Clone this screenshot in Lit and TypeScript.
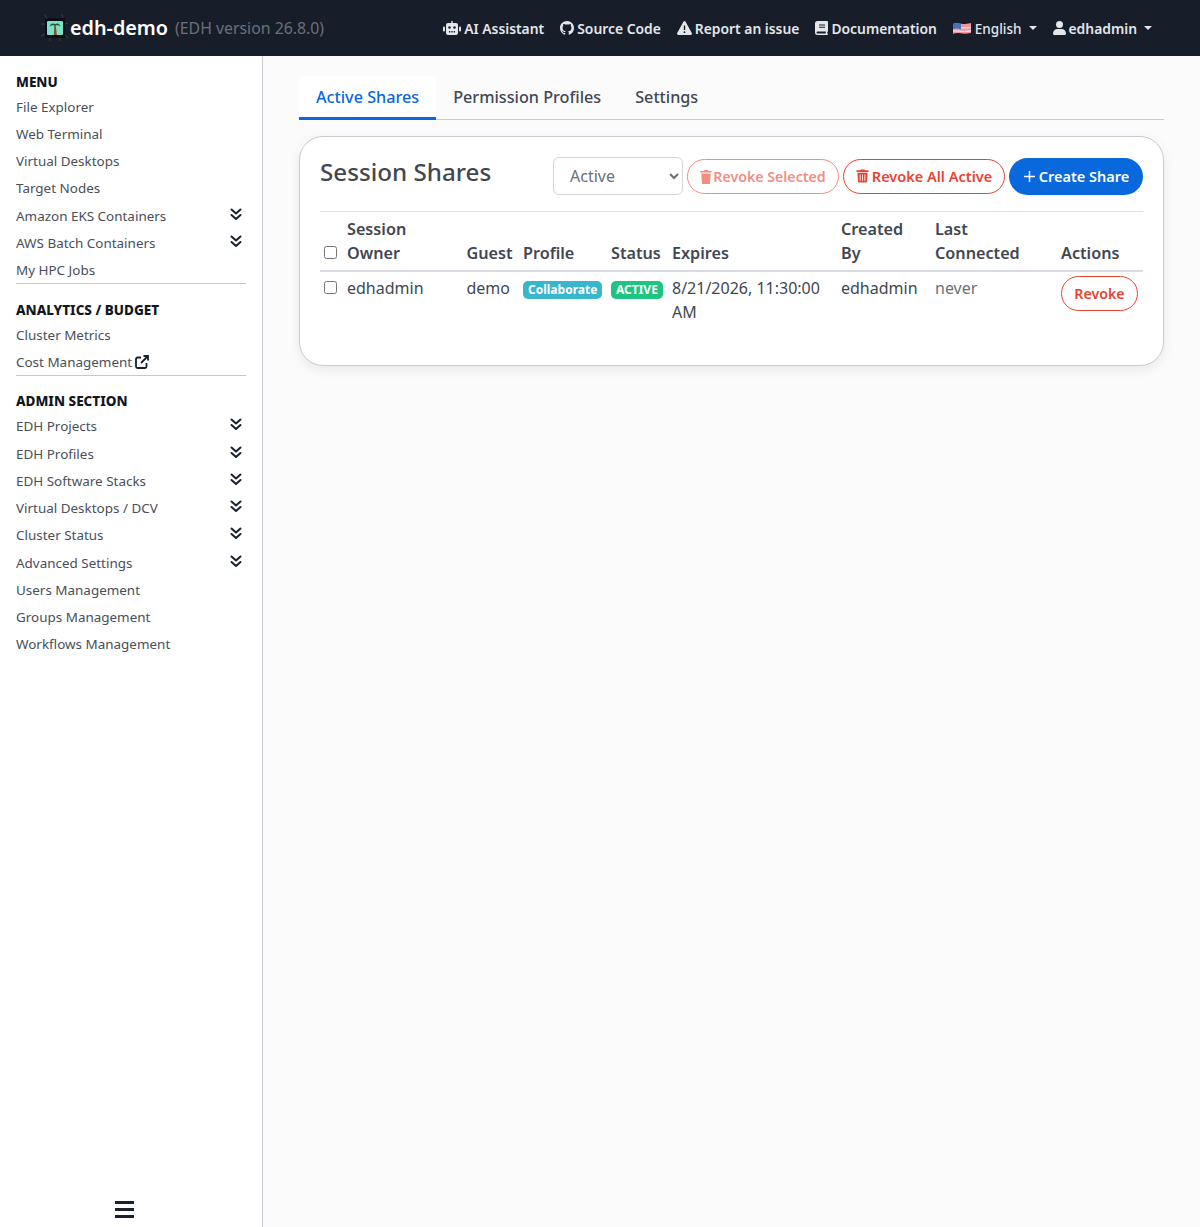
import {LitElement, css, html, svg} from 'lit';
import {customElement, state} from 'lit/decorators.js';

interface SideItem {
  label: string;
  more?: boolean;
  external?: boolean;
}

interface SideSection {
  title: string;
  items: Array<SideItem>;
  rule: boolean;
}

const trash = svg`<path fill="currentColor" d="M4.500.900 5 0h4l.5.900H13.500v1.700H.5V.900zM1.500 3.500h11l-.7 9.500c0 .6-.5 1-1 1H3.200c-.5 0-1-.4-1-1zm2.500 1.800v6.800h.9V5.300zm2.550 0v6.800h.9V5.300zm2.550 0v6.800h.9V5.300z"/>`;

const trashSolid = svg`<path fill="currentColor" d="M4.500.900 5 0h4l.5.900H13.500v1.700H.5V.900zM1.500 3.500h11l-.7 9.500c0 .6-.5 1-1 1H3.200c-.5 0-1-.4-1-1z"/>`;

const github = 'M8 0C3.58 0 0 3.58 0 8c0 3.54 2.29 6.53 5.47 7.59.4.07.55-.17.55-.38 0-.19-.01-.82-.01-1.49-2.01.37-2.53-.49-2.69-.94-.09-.23-.48-.94-.82-1.13-.28-.15-.68-.52-.01-.53.63-.01 1.08.58 1.23.82.72 1.21 1.87.87 2.33.66.07-.52.28-.87.51-1.07-1.78-.2-3.64-.89-3.64-3.95 0-.87.31-1.59.82-2.15-.08-.2-.36-1.02.08-2.12 0 0 .67-.21 2.2.82.64-.18 1.32-.27 2-.27.68 0 1.36.09 2 .27 1.53-1.04 2.2-.82 2.2-.82.44 1.1.16 1.92.08 2.12.51.56.82 1.27.82 2.15 0 3.07-1.87 3.75-3.65 3.95.29.25.54.73.54 1.48 0 1.07-.01 1.93-.01 2.2 0 .21.15.46.55.38A8.013 8.013 0 0016 8c0-4.42-3.58-8-8-8z';

@customElement('app-root')
export class AppRoot extends LitElement {
  static styles = css`
    :host {
      display: flex;
      flex-direction: column;
      min-height: 100vh;
      font-family: "Noto Sans", "Open Sans", sans-serif;
      color: #414752;
      font-size: 16px;
    }
    * {
      box-sizing: border-box;
    }
    header {
      height: 56px;
      background: #171e2a;
      display: flex;
      align-items: center;
      padding: 0 48px 0 41px;
      flex: none;
    }
    .brand {
      display: flex;
      align-items: center;
    }
    .logo {
      width: 28px;
      height: 28px;
      margin-right: 1px;
      display: block;
    }
    .brand-name {
      color: #fff;
      font-size: 19.8px;
      font-weight: 600;
      line-height: 28px;
    }
    .version {
      color: #6b7079;
      font-size: 15.84px;
      margin-left: 7px;
      line-height: 28px;
    }
    .top-nav {
      margin-left: auto;
      display: flex;
      align-items: center;
      color: #e4e6ea;
      font-size: 13.86px;
      font-weight: 600;
      gap: 16px;
    }
    .top-link {
      display: flex;
      align-items: center;
      gap: 3px;
      white-space: nowrap;
    }
    .top-link svg {
      display: block;
      flex: none;
    }
    .light {
      font-weight: 500;
      font-size: 13.5px;
    }
    .flag-text {
      margin-left: 1px;
      padding-top: 1px;
    }
    .caret {
      width: 0;
      height: 0;
      margin-left: 4px;
      border-top: 4px solid #e4e6ea;
      border-left: 4px solid transparent;
      border-right: 4px solid transparent;
    }
    .body {
      flex: 1;
      display: flex;
    }
    aside {
      width: 263px;
      flex: none;
      background: #fff;
      border-right: 1px solid #c6c8cf;
      padding: 15.5px 16px 0;
      display: flex;
      flex-direction: column;
    }
    .side-title {
      color: #12161e;
      font-size: 13.5px;
      font-weight: 800;
      line-height: 21px;
      height: 21px;
      text-transform: uppercase;
    }
    .side-item {
      height: 27.25px;
      display: flex;
      align-items: center;
      justify-content: space-between;
      font-size: 13.44px;
      color: #4a4f59;
      line-height: 21px;
      padding-right: 4px;
    }
    .side-item > span {
      display: flex;
      align-items: center;
      gap: 3px;
    }
    .side-item .more {
      display: block;
      margin-top: -4px;
    }
    .side-section {
      width: 230px;
    }
    .side-list {
      padding-top: 1px;
    }
    .rule {
      border-bottom: 1px solid #c6c8cf;
      margin-bottom: 15.8px;
    }
    .rule .side-list {
      margin-bottom: -1.5px;
    }
    .burger {
      margin-top: auto;
      align-self: flex-start;
      margin-left: 99px;
      margin-bottom: 9px;
      width: 19px;
      display: flex;
      flex-direction: column;
      gap: 4px;
    }
    .burger i {
      display: block;
      height: 3px;
      background: #1a212d;
    }
    main {
      flex: 1;
      background: #fbfbfc;
      padding: 20px 36px 0;
    }
    .tabs {
      display: flex;
      height: 44px;
      border-bottom: 1px solid #c9cbd2;
      font-weight: 500;
      font-size: 16.2px;
    }
    .tab {
      padding: 10px 17px 0;
      color: #414752;
      height: 44px;
    }
    .tab.current {
      color: #0868dc;
      background: #fff;
      border-bottom: 3px solid #0868dc;
      border-radius: 4px 4px 0 0;
    }
    .card {
      margin-top: 16px;
      background: #fff;
      border: 1px solid #c9cbd2;
      border-radius: 24px;
      padding: 20px;
      height: 230px;
      box-shadow: 0 4px 12px rgba(20, 24, 36, 0.08);
    }
    .card-head {
      display: flex;
      align-items: flex-start;
      height: 55px;
      border-bottom: 1px solid #dfe1e7;
    }
    h2 {
      margin: -1px 0 0;
      font-size: 24.2px;
      font-weight: 500;
      line-height: 32px;
      color: #414752;
    }
    .actions {
      margin-left: auto;
      display: flex;
      align-items: center;
      gap: 4px;
      height: 38px;
    }
    select {
      width: 130px;
      height: 38px;
      border: 1px solid #d3d3e3;
      border-radius: 6px;
      background: #fff;
      color: #6b7079;
      font: inherit;
      padding-left: 12px;
    }
    .btn {
      display: flex;
      align-items: center;
      justify-content: center;
      border-radius: 999px;
      font-family: inherit;
      font-size: 14.5px;
      font-weight: 600;
      white-space: nowrap;
      height: 35px;
      padding: 0;
      border: none;
    }
    .btn.danger {
      color: #e8432f;
      border: 1px solid #e8432f;
      background: #fff;
    }
    .btn.faded {
      opacity: 0.6;
      width: 152px;
      font-size: 14.2px;
      gap: 1px;
      padding-top: 1px;
    }
    .btn.all {
      width: 162px;
      gap: 3px;
    }
    .btn.primary {
      color: #fff;
      background: #0868dc;
      width: 134px;
      height: 37px;
      gap: 3px;
    }
    table {
      width: 823px;
      table-layout: fixed;
      border-collapse: collapse;
      line-height: 24px;
    }
    th {
      text-align: left;
      vertical-align: bottom;
      font-weight: 600;
      font-size: 16.2px;
      padding: 5px 4px;
      border-bottom: 2px solid #d9dce5;
    }
    td {
      vertical-align: top;
      padding: 4px;
    }
    input[type='checkbox'] {
      width: 13px;
      height: 13px;
      margin: 0;
      display: block;
    }
    th input[type='checkbox'] {
      margin-bottom: 6px;
    }
    td input[type='checkbox'] {
      margin-top: 5px;
    }
    .badge {
      display: inline-block;
      color: #fff;
      font-size: 12px;
      font-weight: 700;
      line-height: 18px;
      height: 18px;
      padding: 0 5px;
      border-radius: 5px;
      vertical-align: top;
      margin-top: 5px;
      white-space: nowrap;
    }
    .badge.info {
      background: #37b6cd;
    }
    .badge.ok {
      background: #1ec47f;
    }
    .muted {
      color: #6b7079;
    }
    .btn.revoke {
      width: 77px;
      height: 35px;
      font-size: 14.2px;
    }
  `;

  @state()
  sections: Array<SideSection> = [
    {
      title: 'Menu',
      rule: true,
      items: [
        {label: 'File Explorer'},
        {label: 'Web Terminal'},
        {label: 'Virtual Desktops'},
        {label: 'Target Nodes'},
        {label: 'Amazon EKS Containers', more: true},
        {label: 'AWS Batch Containers', more: true},
        {label: 'My HPC Jobs'}
      ]
    },
    {
      title: 'Analytics / Budget',
      rule: true,
      items: [{label: 'Cluster Metrics'}, {label: 'Cost Management', external: true}]
    },
    {
      title: 'Admin Section',
      rule: false,
      items: [
        {label: 'EDH Projects', more: true},
        {label: 'EDH Profiles', more: true},
        {label: 'EDH Software Stacks', more: true},
        {label: 'Virtual Desktops / DCV', more: true},
        {label: 'Cluster Status', more: true},
        {label: 'Advanced Settings', more: true},
        {label: 'Users Management'},
        {label: 'Groups Management'},
        {label: 'Workflows Management'}
      ]
    }
  ];

  logo() {
    return html`<svg class="logo" viewBox="0 0 28 28">
      <rect x="4" y="4" width="20" height="20" fill="#0b0f14" />
      <path d="M4 1l2 4M21 0l1 4M0 10h4M0 22l4-2M24 21l3 3M9 24v3M19 24v3M24 10l3-1" stroke="#3a414c" fill="none" />
      <rect x="6" y="7" width="16" height="14" rx="1" fill="#7fe0c8" />
      <path d="M13.300 11h1.400l1.200 10h-3z" fill="#7a5230" />
      <path d="M8.500 12.500c1-3.500 4-3.700 5.500-2.300 1.500-1.400 4.500-1.200 5.500 2.300-2-1.300-4-1.400-5.500-.7-1.500-.7-3.500-.6-5.500.7z" fill="#1f5a2e" />
    </svg>`;
  }

  flag() {
    return html`<svg width="18" height="13" viewBox="0 0 18 13">
      <path d="M0 2c4-2 7 1.500 18-1v10C8 13 5 9.500 0 12z" fill="#f2939b" />
      <path d="M0 5.500c5-1 8 1.500 18 0M0 9c5-1 8 1.500 18 0" stroke="#f6dde0" stroke-width="1.300" fill="none" />
      <path d="M0 2c3-1.500 5-.5 8 0v5.500C5 6.500 3 6 0 7z" fill="#4470b8" />
    </svg>`;
  }

  robot() {
    return html`<svg width="18" height="14" viewBox="0 0 18 14">
      <path fill="currentColor" fill-rule="evenodd" d="M8.300 0h1.400v2H13a2 2 0 0 1 2 2v8a2 2 0 0 1-2 2H5a2 2 0 0 1-2-2V4a2 2 0 0 1 2-2h3.300zM6.500 5.200a1.300 1.300 0 1 0 0 2.600 1.300 1.300 0 0 0 0-2.600zm5 0a1.300 1.300 0 1 0 0 2.600 1.300 1.300 0 0 0 0-2.600zM6 10v1.500h1.300V10zm2.350 0v1.500h1.300V10zm2.350 0v1.500H12V10z" />
      <rect x="0" y="5.500" width="2" height="5" rx="1" fill="currentColor" />
      <rect x="16" y="5.500" width="2" height="5" rx="1" fill="currentColor" />
    </svg>`;
  }

  warning() {
    return html`<svg width="15" height="14" viewBox="0 0 15 14">
      <path fill="currentColor" fill-rule="evenodd" d="M7.500 0c.5 0 .9.300 1.100.700l6.200 11.200c.5.900-.1 2-1.100 2H1.300c-1 0-1.600-1.100-1.100-2L6.400.700C6.600.300 7 0 7.500 0zM6.800 4.500v4.600h1.400V4.500zm.7 5.700a.95.95 0 1 0 0 1.900.95.95 0 0 0 0-1.900z" />
    </svg>`;
  }

  book() {
    return html`<svg width="13" height="14" viewBox="0 0 13 14">
      <path fill="currentColor" fill-rule="evenodd" d="M2.500 0H12a1 1 0 0 1 1 1v9a1 1 0 0 1-.7.900v1.500c.4.100.7.400.7.800s-.4.800-.9.800H2.500A2.500 2.500 0 0 1 0 11.500v-9A2.500 2.500 0 0 1 2.500 0zM4 3.500v1h6v-1zm0 2.200v1h6v-1zM2.500 10.500a1 1 0 0 0 0 2h8.300v-2z" />
    </svg>`;
  }

  user() {
    return html`<svg width="13" height="14" viewBox="0 0 13 14">
      <circle cx="6.500" cy="3.500" r="3.500" fill="currentColor" />
      <path d="M4.500 8h4A4.500 4.500 0 0 1 13 12.500c0 .8-.7 1.500-1.500 1.500h-10C.7 14 0 13.300 0 12.500A4.500 4.500 0 0 1 4.500 8z" fill="currentColor" />
    </svg>`;
  }

  chevrons() {
    return html`<svg class="more" width="12" height="13" viewBox="0 0 12 13">
      <path d="M1.500 1.500 6 5.500l4.500-4M1.500 7 6 11l4.500-4" fill="none" stroke="#1a212d" stroke-width="2" stroke-linecap="round" stroke-linejoin="round" />
    </svg>`;
  }

  external() {
    return html`<svg width="14" height="14" viewBox="0 0 14 14">
      <path d="M6 2.500H2.500a1.500 1.500 0 0 0-1.500 1.500v7.500A1.500 1.500 0 0 0 2.500 13H10a1.500 1.500 0 0 0 1.500-1.500V8" fill="none" stroke="#1a212d" stroke-width="1.800" />
      <path d="M8.500 1H13v4.500M13 1 6 8" fill="none" stroke="#1a212d" stroke-width="1.800" />
    </svg>`;
  }

  renderSection(section: SideSection) {
    return html`<div class="side-section ${section.rule ? 'rule' : ''}">
      <div class="side-title">${section.title}</div>
      <div class="side-list">
        ${section.items.map(
          item => html`<div class="side-item">
            <span>${item.label}${item.external ? this.external() : ''}</span>
            ${item.more ? this.chevrons() : ''}
          </div>`
        )}
      </div>
    </div>`;
  }

  render() {
    return html`
      <header>
        <div class="brand">
          ${this.logo()}
          <span class="brand-name">edh-demo</span>
          <span class="version">(EDH version 26.8.0)</span>
        </div>
        <nav class="top-nav">
          <div class="top-link">${this.robot()}AI Assistant</div>
          <div class="top-link"><svg width="14" height="14" viewBox="0 0 16 16"><path fill="currentColor" d=${github} /></svg>Source Code</div>
          <div class="top-link">${this.warning()}Report an issue</div>
          <div class="top-link">${this.book()}Documentation</div>
          <div class="top-link light">${this.flag()}<span class="flag-text">English</span><i class="caret"></i></div>
          <div class="top-link">${this.user()}edhadmin<i class="caret"></i></div>
        </nav>
      </header>
      <div class="body">
        <aside>
          ${this.sections.map(s => this.renderSection(s))}
          <div class="burger"><i></i><i></i><i></i></div>
        </aside>
        <main>
          <div class="tabs">
            <div class="tab current">Active Shares</div>
            <div class="tab">Permission Profiles</div>
            <div class="tab">Settings</div>
          </div>
          <section class="card">
            <div class="card-head">
              <h2>Session Shares</h2>
              <div class="actions">
                <select><option>Active</option></select>
                <button class="btn danger faded"><svg width="12" height="14" viewBox="0 0 14 14" preserveAspectRatio="none">${trashSolid}</svg>Revoke Selected</button>
                <button class="btn danger all"><svg width="13" height="14" viewBox="0 0 14 14">${trash}</svg>Revoke All Active</button>
                <button class="btn primary"><svg width="13" height="13" viewBox="0 0 13 13"><path d="M6.500 1v11M1 6.500h11" stroke="#fff" stroke-width="1.500" /></svg>Create Share</button>
              </div>
            </div>
            <table>
              <colgroup>
                <col style="width:23px" /><col style="width:119.500px" /><col style="width:56.500px" /><col style="width:88px" /><col style="width:61px" /><col style="width:169px" /><col style="width:94px" /><col style="width:126px" /><col style="width:86px" />
              </colgroup>
              <thead>
                <tr>
                  <th><input type="checkbox" /></th>
                  <th>Session Owner</th>
                  <th>Guest</th>
                  <th>Profile</th>
                  <th>Status</th>
                  <th>Expires</th>
                  <th>Created<br />By</th>
                  <th>Last Connected</th>
                  <th>Actions</th>
                </tr>
              </thead>
              <tbody>
                <tr>
                  <td><input type="checkbox" /></td>
                  <td>edhadmin</td>
                  <td>demo</td>
                  <td><span class="badge info">Collaborate</span></td>
                  <td><span class="badge ok">ACTIVE</span></td>
                  <td>8/21/2026, 11:30:00 AM</td>
                  <td>edhadmin</td>
                  <td class="muted">never</td>
                  <td><button class="btn danger revoke">Revoke</button></td>
                </tr>
              </tbody>
            </table>
          </section>
        </main>
      </div>
    `;
  }
}
